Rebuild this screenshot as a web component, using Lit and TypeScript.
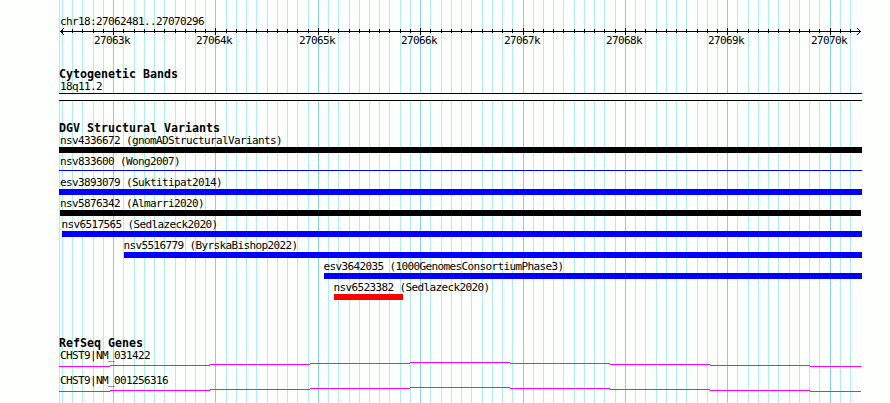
import { LitElement, html, svg, css } from "lit";
import { customElement, property } from "lit/decorators.js";


interface Variant {
  name: string;
  start: number;
  end: number;
  color: string;
  thin?: boolean;
}


interface Tick {
  x: number;
  position: number;
  major: boolean;
}


const START = 27062481;
const END = 27070296;
const VIEW_LEFT = 59;
const VIEW_WIDTH = 803;

const VARIANTS: Variant[] = [
  { name: "nsv4336672 (gnomADStructuralVariants)", start: 0, end: 803, color: "#000000" },
  { name: "nsv833600 (Wong2007)", start: 0, end: 803, color: "#0000ff", thin: true },
  { name: "esv3893079 (Suktitipat2014)", start: 0, end: 803, color: "#0000ff" },
  { name: "nsv5876342 (Almarri2020)", start: 1, end: 802, color: "#000000" },
  { name: "nsv6517565 (Sedlazeck2020)", start: 3, end: 803, color: "#0000ff" },
  { name: "nsv5516779 (ByrskaBishop2022)", start: 65, end: 803, color: "#0000ff" },
  { name: "esv3642035 (1000GenomesConsortiumPhase3)", start: 265, end: 803, color: "#0000ff" },
  { name: "nsv6523382 (Sedlazeck2020)", start: 275, end: 344, color: "#ff0000" },
];

const GENES = ["CHST9|NM_031422", "CHST9|NM_001256316"];

// One tick every 100 bases, a major one every 1000.
function getTicks(): Tick[] {
  const ticks: Tick[] = [];
  for (let p = Math.ceil(START / 100) * 100; p <= END; p += 100) {
    ticks.push({
      x: Math.round(60 + ((p - START) * 800) / (END - START + 1)) - VIEW_LEFT,
      position: p,
      major: p % 1000 === 0,
    });
  }
  return ticks;
}

const TICKS = getTicks();


@customElement("genome-grid")
export class GenomeGridElement extends LitElement {
  static styles = css`
    :host,
    svg {
      display: block;
    }
    .minor {
      fill: #afeeee;
    }
    .major {
      fill: #87ceeb;
    }
  `;

  render() {
    return html`
      <svg width=${VIEW_WIDTH} height="403" shape-rendering="crispEdges">
        <rect class="minor" x="0" y="0" width="1" height="403" />
        ${TICKS.map(
          (t) => svg`<rect class=${t.major ? "major" : "minor"} x=${t.x} y="0" width="1" height="403" />`
        )}
      </svg>
    `;
  }
}


@customElement("genome-ruler")
export class GenomeRulerElement extends LitElement {
  static styles = css`
    :host,
    svg {
      display: block;
    }
    text {
      font: 11px "DejaVu Sans Mono", monospace;
      letter-spacing: -0.62px;
    }
  `;

  render() {
    return html`
      <svg width=${VIEW_WIDTH} height="19">
        <g shape-rendering="crispEdges">
          <rect x="1" y="3" width="801" height="1" />
          ${[1, 2, 3].map(
            (i) => svg`
              <rect x=${1 + i} y=${3 - i} width="1" height="1" />
              <rect x=${1 + i} y=${3 + i} width="1" height="1" />
              <rect x=${801 - i} y=${3 - i} width="1" height="1" />
              <rect x=${801 - i} y=${3 + i} width="1" height="1" />`
          )}
          ${TICKS.map((t) =>
            t.major
              ? svg`<rect x=${t.x} y="0" width="1" height="7" />`
              : svg`<rect x=${t.x} y="1" width="1" height="4" />`
          )}
        </g>
        ${TICKS.filter((t) => t.major).map(
          (t) => svg`<text x=${t.x - 19} y="16">${t.position / 1000}k</text>`
        )}
      </svg>
    `;
  }
}


@customElement("gene-intron")
export class GeneIntronElement extends LitElement {
  static styles = css`
    :host,
    svg {
      display: block;
    }
    rect {
      fill: #ff00ff;
    }
  `;

  // The intron is a very flat hat, so it shows as one pixel steps.
  private steps = [
    { x: 0, y: 4 },
    { x: 51, y: 3 },
    { x: 151, y: 2 },
    { x: 251, y: 1 },
    { x: 351, y: 0 },
    { x: 451, y: 1 },
    { x: 551, y: 2 },
    { x: 651, y: 3 },
    { x: 751, y: 4 },
  ];

  render() {
    return html`
      <svg width=${VIEW_WIDTH} height="5" shape-rendering="crispEdges">
        ${this.steps.map((s, i) => {
          const next = this.steps[i + 1]?.x ?? 802;
          return svg`<rect x=${s.x} y=${s.y} width=${next - s.x} height="1" />`;
        })}
      </svg>
    `;
  }
}


@customElement("app-root")
export class AppRootElement extends LitElement {
  static styles = [
    css`
      :host {
        display: block;
        position: relative;
        box-sizing: border-box;
        width: 890px;
        height: 403px;
        padding: 15px 28px 0 59px;
        overflow: hidden;
        background: #fdfffc;
        color: #000;
      }
      genome-grid {
        position: absolute;
        top: 0;
        left: 59px;
      }
      .tracks {
        position: relative;
        display: flex;
        flex-direction: column;
        gap: 21px;
      }
      .title {
        height: 12px;
        font: bold 11.63px/12px "DejaVu Sans Mono", monospace;
        white-space: nowrap;
      }
      .label {
        height: 13px;
        padding-left: 1px;
        font: 11px/13px "DejaVu Sans Mono", monospace;
        letter-spacing: -0.62px;
        white-space: nowrap;
      }
      .band {
        box-sizing: border-box;
        height: 8px;
        border: solid #000;
        border-width: 1px 0;
        background: #fdfffc;
      }
      .variants {
        margin-bottom: 14px;
      }
      .variant {
        height: 21px;
      }
      .variant.inset .label {
        padding-left: 0;
      }
      .variant.inset.shifted .label {
        text-indent: -0.5px;
      }
      .bar {
        height: 6px;
      }
      .bar.thin {
        height: 1px;
        margin-top: 2px;
      }
      .gene {
        height: 25px;
      }
    `,
  ];

  @property({ type: Array })
  variants: Variant[] = VARIANTS;

  private renderVariant(v: Variant) {
    return html`
      <div
        class="variant ${v.start > 0 ? "inset" : ""} ${v.start > 1 ? "shifted" : ""}"
        style="margin-left: ${v.start}px"
      >
        <div class="label">${v.name}</div>
        <div
          class="bar ${v.thin ? "thin" : ""}"
          style="width: ${v.end - v.start}px; background: ${v.color}"
        ></div>
      </div>
    `;
  }

  render() {
    return html`
      <genome-grid></genome-grid>
      <div class="tracks">
        <div>
          <div class="label">chr18:27062481..27070296</div>
          <genome-ruler></genome-ruler>
        </div>
        <div>
          <div class="title">Cytogenetic Bands</div>
          <div class="label">18q11.2</div>
          <div class="band"></div>
        </div>
        <div class="variants">
          <div class="title">DGV Structural Variants</div>
          ${this.variants.map((v) => this.renderVariant(v))}
        </div>
        <div>
          <div class="title">RefSeq Genes</div>
          ${GENES.map(
            (name) => html`<div class="gene">
              <div class="label">${name}</div>
              <gene-intron></gene-intron>
            </div>`
          )}
        </div>
      </div>
    `;
  }
}
